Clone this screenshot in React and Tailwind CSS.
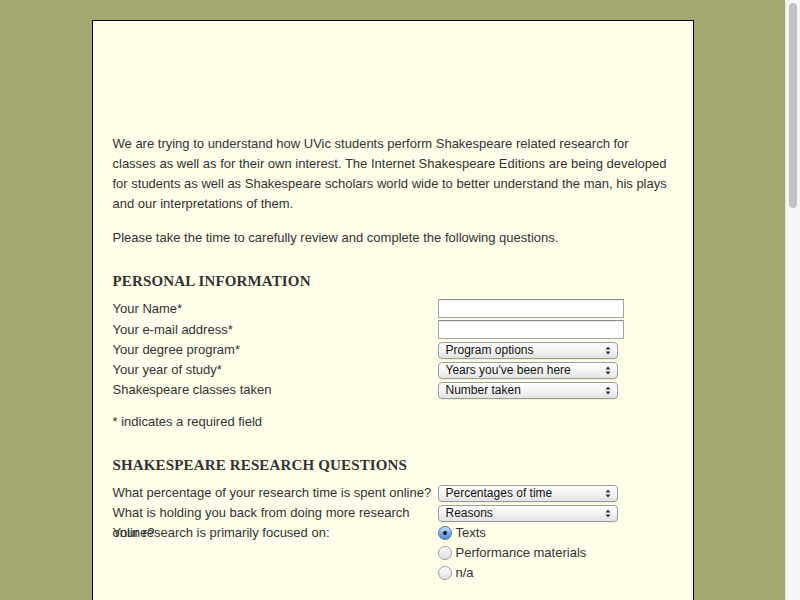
import React from "react";

const Arrows = () => (
  <svg width="6" height="9" viewBox="0 0 6 9" className="shrink-0">
    <path d="M3 0.5 L5.5 3.5 L0.5 3.5 Z" fill="#333" />
    <path d="M3 8.5 L5.5 5.5 L0.5 5.5 Z" fill="#333" />
  </svg>
);

const Select = ({ label }) => (
  <div className="flex h-[17px] w-[180px] items-center rounded-[4px] border border-[#9c9c9c] bg-linear-to-b from-white via-[#f4f4f4] to-[#e2e2e2] pl-[7px] pr-[6px] text-[12px] leading-none text-[#111] shadow-[0_1px_0_rgba(0,0,0,0.06)]">
    <span className="flex-1">{label}</span>
    <Arrows />
  </div>
);

const TextInput = () => (
  <div className="h-[19px] w-[186px] border border-[#a5a5a5] border-t-[#8e8e8e] bg-white shadow-[inset_0_1px_1px_rgba(0,0,0,0.08)]" />
);

const Radio = ({ checked, label }) => (
  <div className="flex h-5 items-center gap-[4px]">
    {checked ? (
      <span className="flex h-[14px] w-[14px] items-center justify-center rounded-full border border-[#4f76ad] bg-linear-to-b from-[#c9def7] via-[#7fb0ea] to-[#4d8ddc]">
        <span className="h-[4px] w-[4px] rounded-full bg-[#141414]" />
      </span>
    ) : (
      <span className="h-[14px] w-[14px] rounded-full border border-[#9d9d9d] bg-linear-to-b from-white to-[#dedede]" />
    )}
    <span>{label}</span>
  </div>
);

const Row = ({ label, children, tall }) => (
  <div className={`flex items-center ${tall ? "h-[21px]" : "h-5"}`}>
    <div className="h-5 w-[325px] shrink-0 whitespace-nowrap">{label}</div>
    {children}
  </div>
);

export default function App() {
  return (
    <div className="flex h-screen overflow-hidden bg-[#a4a86f]">
      <div className="min-w-0 flex-1">
        <div className="pt-5">
          <div className="mx-auto min-h-[1700px] w-[602px] border border-black bg-[#fffee8] px-5 pt-[113px] font-['Liberation_Sans',Arial,sans-serif] text-[13px] leading-5 text-[#333]">
            <p>
              We are trying to understand how UVic students perform Shakespeare related research for
              <br />
              classes as well as for their own interest. The Internet Shakespeare Editions are being developed
              <br />
              for students as well as Shakespeare scholars world wide to better understand the man, his plays
              <br />
              and our interpretations of them.
            </p>
            <p className="mt-[14px]">
              Please take the time to carefully review and complete the following questions.
            </p>

            <h2 className="mt-[23px] font-['Liberation_Serif',Georgia,serif] text-[15px] font-bold leading-5 tracking-[0.15px] text-[#333]">
              PERSONAL INFORMATION
            </h2>
            <div className="mt-[7px]">
              <Row label="Your Name*" tall>
                <TextInput />
              </Row>
              <Row label="Your e-mail address*" tall>
                <TextInput />
              </Row>
              <Row label="Your degree program*">
                <Select label="Program options" />
              </Row>
              <Row label="Your year of study*">
                <Select label="Years you've been here" />
              </Row>
              <Row label="Shakespeare classes taken">
                <Select label="Number taken" />
              </Row>
            </div>
            <p className="mt-3">* indicates a required field</p>

            <h2 className="mt-[23px] font-['Liberation_Serif',Georgia,serif] text-[15px] font-bold leading-5 tracking-[0.15px] text-[#333]">
              SHAKESPEARE RESEARCH QUESTIONS
            </h2>
            <div className="mt-2">
              <Row label="What percentage of your research time is spent online?">
                <Select label="Percentages of time" />
              </Row>
              <Row
                label={
                  <>
                    What is holding you back from doing more research
                    <br />
                    online?
                  </>
                }
              >
                <Select label="Reasons" />
              </Row>
              <div className="flex">
                <div className="h-5 w-[325px] shrink-0">Your research is primarily focused on:</div>
                <div>
                  <Radio checked label="Texts" />
                  <Radio label="Performance materials" />
                  <Radio label="n/a" />
                </div>
              </div>
            </div>
          </div>
        </div>
      </div>
      {/* scrollbar */}
      <div className="w-[15px] shrink-0 border-l border-[#e4e4e4] bg-[#f6f6f6] px-[3px] pt-[3px]">
        <div className="mx-auto h-[205px] w-[8px] rounded-full bg-[#c3c3c3]" />
      </div>
    </div>
  );
}
